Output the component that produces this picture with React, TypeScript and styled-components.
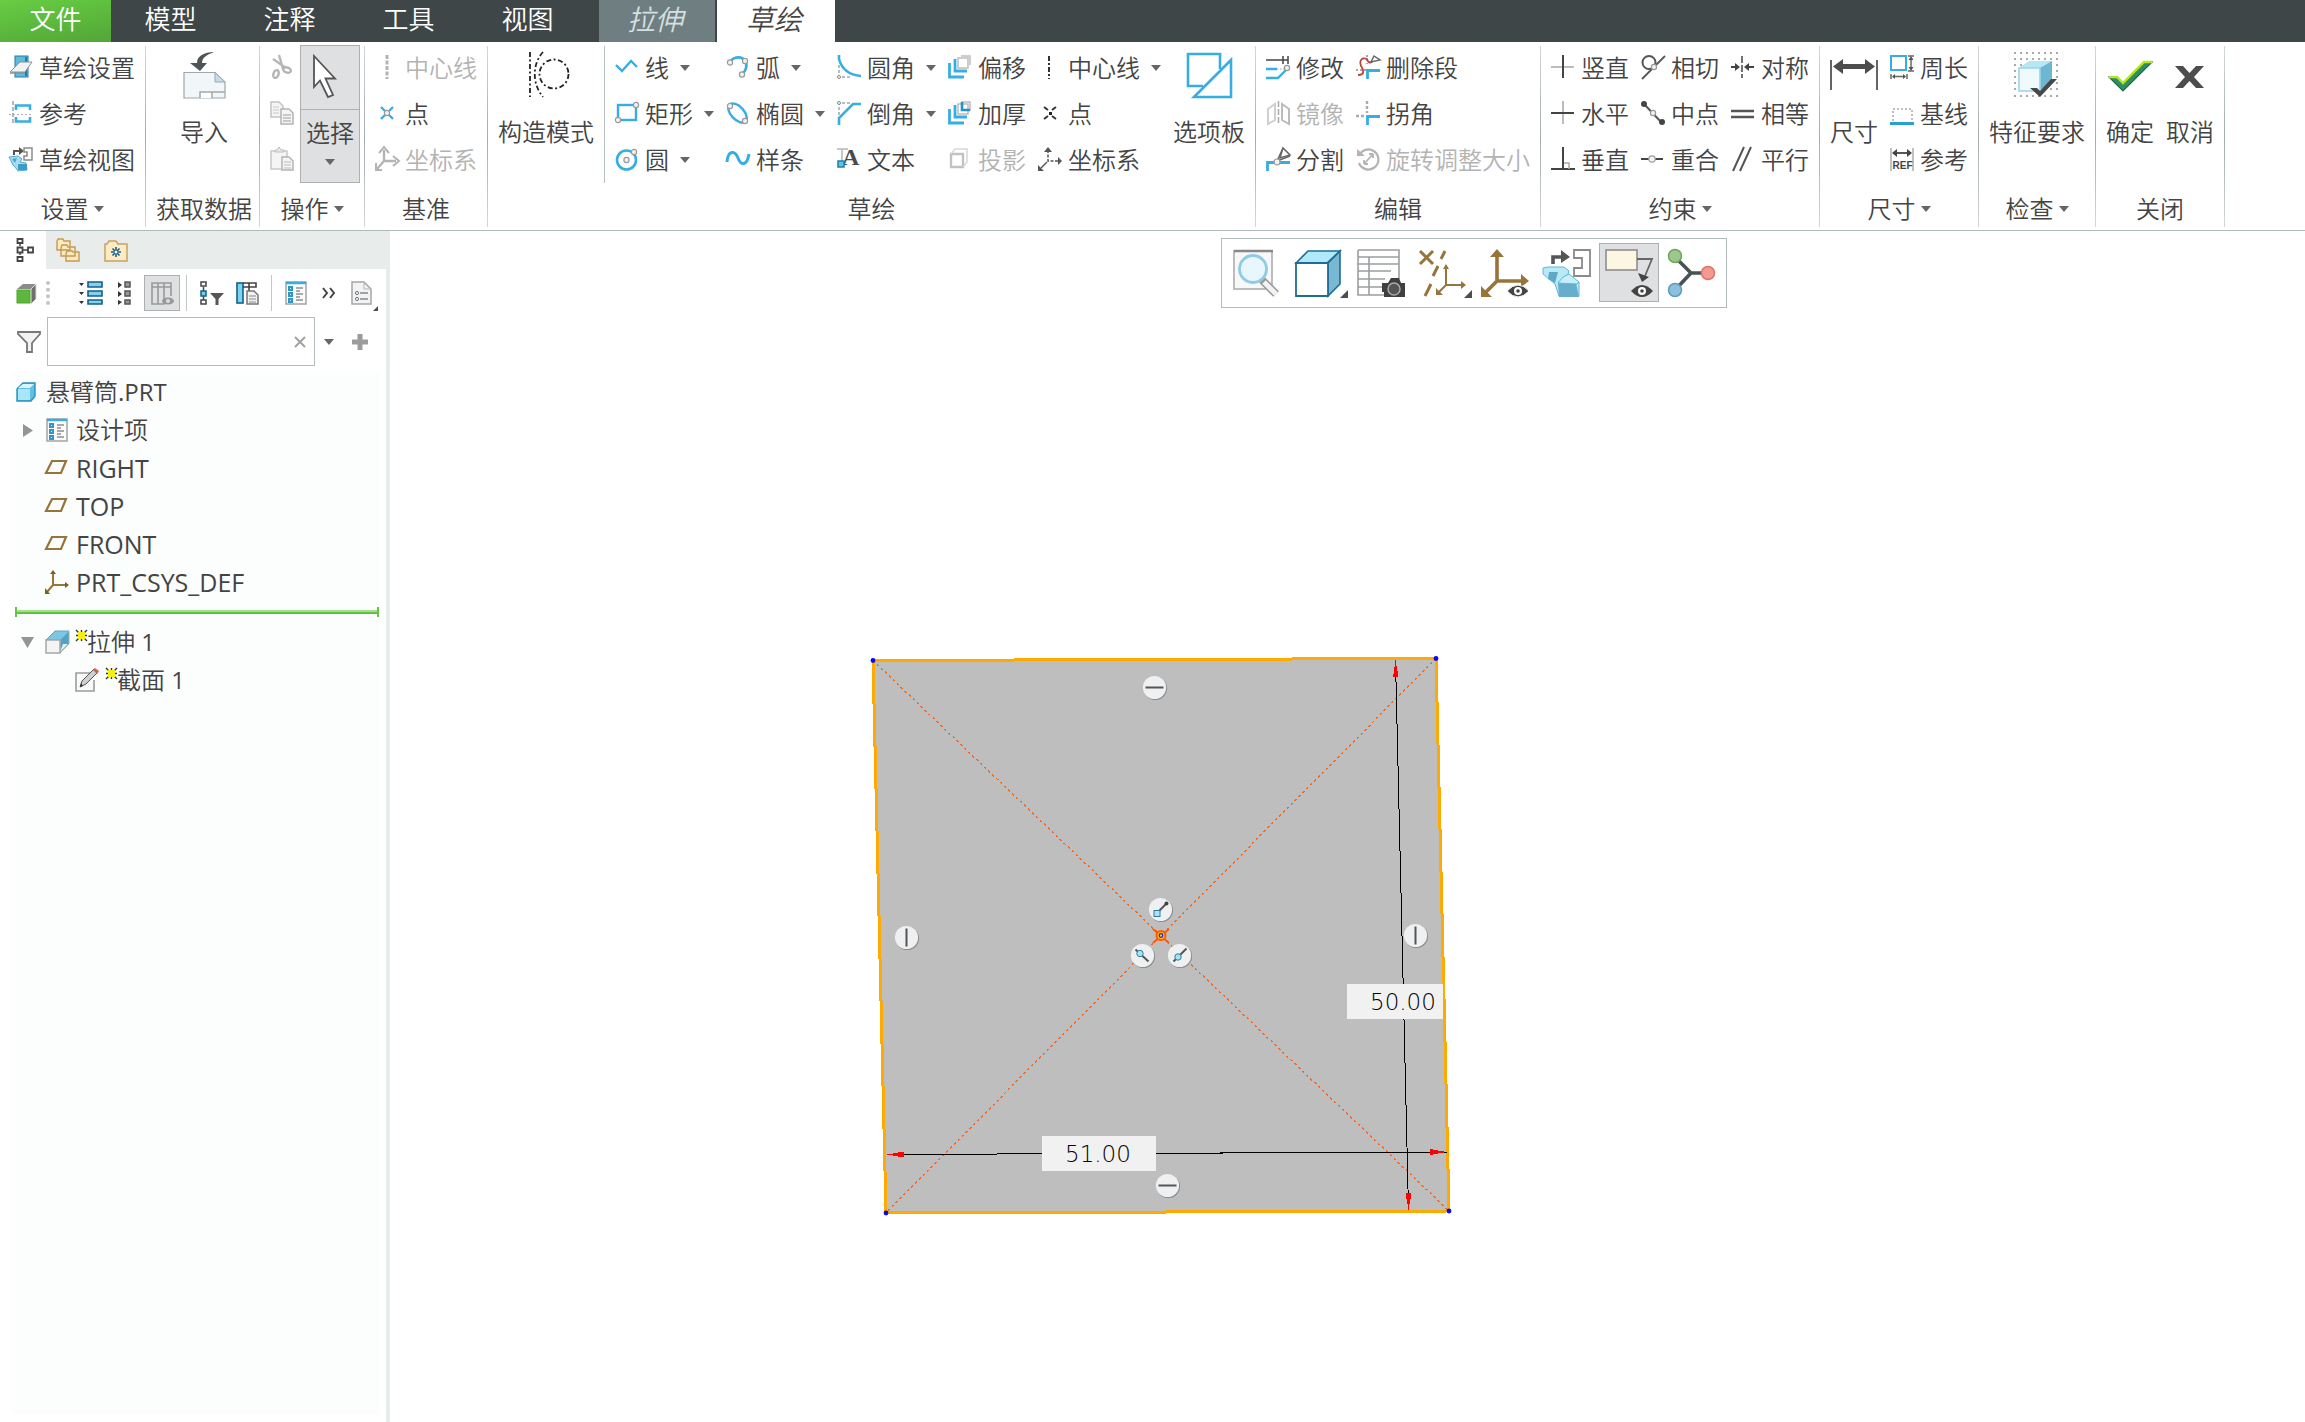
import React from "react";
import styled, { createGlobalStyle, css } from "styled-components";

const ink = "#444444";
const blue = "#36aee4";
const deep = "#1f7fa8";
const gray = "#b4b4b4";
const bronze = "#96743a";

const GlobalStyle = createGlobalStyle`
  *, *::before, *::after { box-sizing: border-box; }
  body { margin: 0; background: #ffffff; }
  body, button, input {
    font-family: "Open Sans", "Noto Sans CJK SC DemiLight", "Noto Sans CJK SC", sans-serif;
    font-size: 24px;
    color: ${ink};
  }
  button { border: 0; padding: 0; margin: 0; background: none; cursor: pointer; }
`;

/* ---------- icons ---------- */

const Dot = ({ x, y, r = 2.6 }: { x: number; y: number; r?: number }) => (
  <circle cx={x} cy={y} r={r} fill="#f2f2f2" stroke="#9a9a9a" strokeWidth="1.2" />
);

const small: Record<string, React.ReactNode> = {
  setup: (
    <>
      <rect x="6" y="1" width="13" height="21" fill="#62b9de" stroke={deep} />
      <path d="M17 2v19" stroke={deep} strokeWidth="2" />
      <path d="M1 17L11 7H23L16 17Z" fill="#f0f3f4" stroke="#8c9294" />
      <path d="M1 18h15" stroke="#8c9294" strokeWidth="1.5" />
    </>
  ),
  reference: (
    <>
      <path d="M4 0V23" stroke="#9a9a9a" strokeDasharray="4 2" strokeWidth="1.4" />
      <path d="M0 13.500H22" stroke="#b0b0b0" strokeDasharray="2 2" />
      <path d="M7 9V4.500H21V9M7 16V20.500H21V16" stroke={blue} strokeWidth="2.6" />
    </>
  ),
  sketchView: (
    <>
      <path d="M5 8V4H11" stroke="#555" strokeWidth="2" />
      <path d="M10 0L15 4L10 8Z" fill="#555" />
      <path d="M15 1H23V13H15V9H18V5H15Z" fill="#fff" stroke="#8a8a8a" strokeWidth="1.500" />
      <path d="M0 10L9 9L13 12L11 15L17 16L18 23L9 24L6 20L4 18Z" fill="#a9dcf0" stroke="#55acd0" />
      <path d="M9 17H18V23H9Z" fill="#3d9cc6" />
      <path d="M3 12L8 11L6 16Z" fill="#4ba5cc" />
    </>
  ),
  cut: (
    <>
      <path d="M9 0L13 14M3 4L16 13" stroke="#b5b8b9" strokeWidth="2.400" />
      <ellipse cx="6" cy="19" rx="2.500" ry="4" transform="rotate(20 6 19)" stroke={gray} strokeWidth="2.400" />
      <ellipse cx="17" cy="15" rx="4" ry="2.500" transform="rotate(20 17 15)" stroke={gray} strokeWidth="2.400" />
    </>
  ),
  copy: (
    <>
      <path d="M1 1H9L13 5V16H1Z" fill="#f5f5f5" stroke="#c4c4c4" strokeWidth="1.500" />
      <path d="M3 6h6M3 9h6M3 12h6" stroke="#c9c9c9" />
      <path d="M11 8H19L23 12V23H11Z" fill="#f5f5f5" stroke="#b4b4b4" strokeWidth="1.500" />
      <path d="M13 14h8M13 17h8M13 20h8" stroke="#bbb" strokeWidth="1.500" />
    </>
  ),
  paste: (
    <>
      <path d="M1 4H17V22H1Z" fill="#f5f5f5" stroke="#c8c8c8" strokeWidth="1.500" />
      <path d="M5 5V3H7L9 0L11 3H14V5Z" fill="#e9e9e9" stroke="#bdbdbd" />
      <path d="M12 10H19L23 14V23H12Z" fill="#f5f5f5" stroke="#b4b4b4" strokeWidth="1.500" />
      <path d="M14 15h7M14 18h7M14 21h7" stroke="#bbb" strokeWidth="1.200" />
    </>
  ),
  axisOff: <path d="M12 0V24" stroke={gray} strokeWidth="3" strokeDasharray="4 1.500" />,
  datumPoint: (
    <>
      <path d="M6 6L10 10M18 6L14 10M6 18L10 14M18 18L14 14" stroke={blue} strokeWidth="2.400" />
      <Dot x={12} y={12} />
    </>
  ),
  csysOff: (
    <>
      <path d="M9 3V14H21M9 14L2 22" stroke={gray} strokeWidth="2.400" />
      <path d="M4 6L9 0L14 6M18 9L24 14L18 19M1 16V23H7" stroke={gray} strokeWidth="2" />
    </>
  ),
  line: <path d="M1 10L7 16L16 6L22 12" stroke={blue} strokeWidth="2.400" />,
  rect: (
    <>
      <rect x="3" y="4" width="18" height="15" stroke={blue} strokeWidth="2.400" />
      <Dot x={3} y={19} />
      <Dot x={21} y={4} />
    </>
  ),
  circle: (
    <>
      <circle cx="11.500" cy="13" r="9.500" stroke={blue} strokeWidth="2.600" />
      <Dot x={11.5} y={13} />
      <Dot x={19} y={5} />
    </>
  ),
  arc: (
    <>
      <path d="M4 7C8 1 16 1 19 6C22 10 20 16 16 19" stroke={blue} strokeWidth="2.600" />
      <Dot x={4} y={7.5} />
      <Dot x={19} y={6} />
      <Dot x={16} y={19.5} />
    </>
  ),
  ellipse: (
    <>
      <ellipse cx="11.500" cy="12" rx="11.500" ry="6.500" transform="rotate(47 11.500 12)" stroke={blue} strokeWidth="2.400" />
      <Dot x={4} y={5} />
      <Dot x={19} y={20} />
    </>
  ),
  spline: <path d="M1 15C2 3 9 3 12 11S21 19 23 7" stroke={blue} strokeWidth="3" />,
  fillet: (
    <>
      <path d="M2 10V22H14" stroke="#777" strokeDasharray="3 2" />
      <path d="M2 0V4C5 15 12 20 24 21" stroke={blue} strokeWidth="2.600" />
      <circle cx="2" cy="22" r="1.500" stroke="#888" fill="#fff" />
    </>
  ),
  chamfer: (
    <>
      <path d="M2 14V2H14" stroke="#777" strokeDasharray="3 2" />
      <path d="M2 24V17L16 3H24" stroke={blue} strokeWidth="2.600" />
      <circle cx="2" cy="2" r="1.500" stroke="#888" fill="#fff" />
    </>
  ),
  text: (
    <>
      <path d="M0 2H11M5 2V14" stroke="#b5b5b5" strokeWidth="1.500" />
      <text x="5" y="18" fontFamily="Liberation Serif, serif" fontWeight="700" fontSize="24" fill="#4a4a4a">A</text>
      <rect x="1" y="14" width="6" height="6" fill="#5ec2ea" stroke={deep} strokeWidth="1.500" />
    </>
  ),
  offset: (
    <>
      <path d="M10 3H20V13H10ZM13 1H22V10" stroke="#bdbdbd" strokeWidth="1.500" />
      <path d="M1.500 8V22H16" stroke={blue} strokeWidth="2.800" />
      <path d="M7 4V16H19" stroke={blue} strokeWidth="2.800" />
    </>
  ),
  thicken: (
    <>
      <path d="M10 3H20V13H10ZM13 1H22V10" stroke="#bdbdbd" strokeWidth="1.500" />
      <path d="M1.500 8V22H16" stroke={blue} strokeWidth="2.800" />
      <path d="M7 4V16H19" stroke={blue} strokeWidth="2.800" />
      <path d="M14 1V9H22" stroke="#2493c8" strokeWidth="2.600" />
    </>
  ),
  project: (
    <>
      <path d="M3 7H15V20H3Z" stroke="#c2c2c2" strokeWidth="2.400" />
      <path d="M3 7L7 2H19V15L15 20" stroke="#d8d8d8" strokeWidth="1.500" />
    </>
  ),
  centerline: <path d="M11 1V24" stroke="#333" strokeWidth="2" strokeDasharray="5 2 2 2" />,
  point: (
    <>
      <path d="M6 6L10 9M18 6L14 9M6 18L10 15M18 18L14 15" stroke="#333" strokeWidth="2" />
      <rect x="11" y="11" width="3" height="3" fill="#222" />
    </>
  ),
  csys: (
    <>
      <path d="M10 3V14H20" stroke="#555" strokeWidth="1.500" strokeDasharray="3 1.500" />
      <path d="M6 5L10 0L14 5ZM20 10L24 14L20 18ZM0 18V24H6Z" fill="#555" />
      <path d="M9 15L3 21" stroke="#555" strokeWidth="1.500" />
    </>
  ),
  modify: (
    <>
      <path d="M0 5H22M17 1V9M22 1V9" stroke="#444" strokeWidth="1.500" />
      <path d="M0 14H11M0 23H12L20 15" stroke={blue} strokeWidth="2.400" />
      <path d="M11 14H19" stroke="#aaa" strokeDasharray="1.500 1.500" />
      <Dot x={21} y={13} />
    </>
  ),
  mirror: (
    <>
      <path d="M2 8L9 3V19L2 23Z" stroke="#d0d0d0" strokeWidth="2" />
      <path d="M23 8L16 3V19L23 23Z" stroke="#bcbcbc" strokeWidth="2" />
      <path d="M12.500 0V24" stroke="#aaa" strokeWidth="1.500" strokeDasharray="6 2" />
    </>
  ),
  divide: (
    <>
      <path d="M1.500 24V15.500H24" stroke={blue} strokeWidth="2.800" />
      <path d="M11 14L17 1M11 14L24 9" stroke="#666" strokeWidth="1.500" />
      <path d="M14 11L17 1L24 8Z" fill="#fff" stroke="#666" strokeWidth="1.500" />
      <Dot x={11} y={15} r={3} />
    </>
  ),
  trimDelete: (
    <>
      <path d="M11 0V9M0 15H10" stroke="#aaa" strokeWidth="2" strokeDasharray="2 2" />
      <path d="M11.500 24V15.500H24" stroke={blue} strokeWidth="2.800" />
      <path d="M2 20C9 20 8 15 5 11C3 5 6 2 11 4C12 8 15 9 17 5" stroke="#b4483c" strokeWidth="1.800" />
      <path d="M15 7L18 1L24 5Z" fill="#fff" stroke="#666" strokeWidth="1.500" />
    </>
  ),
  corner: (
    <>
      <path d="M11 0V12M0 15H10" stroke="#aaa" strokeWidth="2.400" strokeDasharray="3 2" />
      <path d="M11.500 24V15.500H24" stroke={blue} strokeWidth="2.800" />
    </>
  ),
  rotate: (
    <>
      <path d="M3 9A10 10 0 1 1 3 16" stroke={gray} strokeWidth="2.200" />
      <path d="M1 2V9H9Z" fill={gray} />
      <path d="M8 17L17 7M17 7h-4M17 7v4M8 17h4M8 17v-4" stroke={gray} strokeWidth="1.800" />
    </>
  ),
  vertical: (
    <>
      <path d="M0 12H23" stroke="#bdbdbd" strokeWidth="2" />
      <path d="M12 0V23" stroke="#444" strokeWidth="2" />
    </>
  ),
  horizontal: (
    <>
      <path d="M12 0V23" stroke="#bdbdbd" strokeWidth="2" />
      <path d="M0 12H23" stroke="#444" strokeWidth="2" />
    </>
  ),
  perpendicular: (
    <>
      <path d="M12 0V22M0 22H24" stroke="#444" strokeWidth="2" />
      <path d="M13 16H18V22" stroke="#aaa" strokeWidth="1.500" />
    </>
  ),
  tangent: (
    <>
      <circle cx="8" cy="7.500" r="6.500" stroke="#555" strokeWidth="2" />
      <path d="M1 24L24 1" stroke="#555" strokeWidth="1.800" />
      <Dot x={13} y={12} />
    </>
  ),
  midpoint: (
    <>
      <path d="M3 3L21 22" stroke="#555" strokeWidth="2" />
      <circle cx="3" cy="3" r="3" fill="#444" />
      <circle cx="21" cy="21" r="3" fill="#444" />
      <Dot x={12} y={12} />
    </>
  ),
  coincident: (
    <>
      <path d="M0 12H22" stroke="#444" strokeWidth="2" />
      <Dot x={11} y={12} r={3.2} />
    </>
  ),
  symmetric: (
    <>
      <path d="M11 1V23" stroke="#444" strokeWidth="1.500" strokeDasharray="7 2" />
      <path d="M0 12H6M17 12H23" stroke="#444" strokeWidth="1.800" />
      <path d="M4 8L9 12L4 16ZM18 8L13 12L18 16Z" fill="#444" />
    </>
  ),
  equal: <path d="M0 10H23M0 16H23" stroke="#555" strokeWidth="2.400" />,
  parallel: <path d="M2 24L13 0M9 24L20 0" stroke="#555" strokeWidth="2" />,
  perimeter: (
    <>
      <rect x="1" y="1" width="15" height="14" stroke={blue} strokeWidth="2" />
      <path d="M18 1H24M18 16H24M21 3V14M1 19V24M17 19V24M3 21.500H15" stroke="#666" strokeWidth="1.500" />
      <path d="M18.500 5L21 1L23.500 5ZM18.500 12L21 16L23.500 12ZM5 19L2 21.500L5 24ZM13 19L16 21.500L13 24Z" fill="#555" />
    </>
  ),
  baseline: (
    <>
      <path d="M3 20V8H22V20" stroke="#aaa" strokeWidth="1.500" strokeDasharray="2 2" />
      <path d="M0 22.500H24" stroke="#2b9fd4" strokeWidth="3" />
    </>
  ),
  refDim: (
    <>
      <path d="M1 1V24M23 1V24" stroke="#999" strokeWidth="1.200" />
      <path d="M3 6H21" stroke="#444" strokeWidth="1.800" />
      <path d="M7 2L2 6L7 10ZM17 2L22 6L17 10Z" fill="#444" />
      <text x="2.500" y="22" fontFamily="Liberation Sans, sans-serif" fontWeight="700" fontSize="10" fill="#444">REF</text>
    </>
  ),
  /* side panel */
  tree: (
    <>
      <path d="M6 6V8M6 14V17M9 12H14" stroke="#444" strokeWidth="1.500" />
      <path d="M3.500 1H8.500V5H3.500ZM3.500 9.500H8.500V14.500H3.500ZM3.500 19H8.500V23H3.500ZM14 9.500H19V14.500H14Z" stroke="#444" strokeWidth="1.800" />
    </>
  ),
  folders: (
    <path d="M1 3L2 1H7L8 3H14V12H1ZM5 10L6 7H11L12 9H19V18H5ZM10 16L11 13H16L17 14H23V23H10Z" fill="#fbe9c0" stroke="#c49a55" strokeWidth="1.400" />
  ),
  favorites: (
    <>
      <path d="M1 23V6H3L5 3H12L14 6H23V23Z" fill="#fdebc4" stroke="#c9a163" strokeWidth="1.500" />
      <path d="M12 9V19M7 14H17M8.500 10.500L15.500 17.500M15.500 10.500L8.500 17.500" stroke="#15608a" strokeWidth="1.600" />
      <circle cx="12" cy="14" r="1.500" fill="#fff" />
    </>
  ),
  greenCube: (
    <>
      <path d="M1 8L7 3H20L15 8Z" fill="#8b8b8b" />
      <path d="M15 8L20 3V18L15 23Z" fill="#6f6f6f" stroke="#ddd" strokeWidth="1" />
      <rect x="1" y="9" width="13" height="13" fill="#5cb83a" stroke="#4ca52c" />
    </>
  ),
  expand: (
    <>
      <path d="M0 2H5L2.500 5ZM0 11H5L2.500 14ZM0 20H5L2.500 23Z" fill="#333" />
      <path d="M9 1H23V6H9ZM9 10H23V15H9ZM9 19H23V23H9Z" fill="#7fd3f2" stroke="#155f86" strokeWidth="1.600" />
    </>
  ),
  collapse: (
    <>
      <path d="M5 1L9 4L5 7ZM5 10L9 13L5 16ZM5 19L9 21L5 24Z" fill="#333" />
      <path d="M12 1H17V6H12ZM12 10H17V15H12ZM12 19H17V23H12Z" fill="#999" stroke="#555" strokeWidth="1.500" />
    </>
  ),
  columns: (
    <>
      <path d="M2 2H21V6H2ZM2 6V23H8V2M8 6V23H14V2M14 6V23M21 6V15" stroke="#999" strokeWidth="1.600" />
      <ellipse cx="18" cy="20" rx="6" ry="3.500" fill="#999" />
      <circle cx="18" cy="20" r="2" fill="#ddd" />
    </>
  ),
  treeFilter: (
    <>
      <path d="M3.500 6V19" stroke="#444" strokeWidth="1.500" />
      <path d="M1 1H6V5H1ZM1 19H6V23H1Z" fill="#fff" stroke="#444" strokeWidth="1.500" />
      <rect x="1" y="10" width="5" height="5" fill="#6fcdf2" stroke="#155f86" strokeWidth="1.500" />
      <path d="M10 12H24L18.500 18V24H15.500V18Z" fill="#555" />
    </>
  ),
  columnDoc: (
    <>
      <rect x="1" y="2" width="6" height="20" fill="#7fd3f2" stroke="#155f86" strokeWidth="1.600" />
      <path d="M7 2H20V6H7M13 2V12" stroke="#444" strokeWidth="1.600" />
      <path d="M11 10H18L22 14V23H11Z" fill="#f2f2f2" stroke="#777" strokeWidth="1.500" />
      <path d="M13 15h7M13 18h7M13 21h7" stroke="#888" />
    </>
  ),
  list: (
    <>
      <rect x="2" y="1" width="20" height="22" fill="#fbfbfb" stroke="#a4a4a4" strokeWidth="1.500" />
      <path d="M2 2H22" stroke={blue} strokeWidth="2.400" />
      <path d="M5 6h3v3H5ZM5 12h3v3H5ZM5 18h3v3H5Z" fill="#d8f1fb" stroke="#2f97c8" strokeWidth="2" />
      <path d="M12 7H19M12 10H16M12 13H19M12 16H16M12 19H19" stroke="#909090" strokeWidth="1.300" />
    </>
  ),
  docList: (
    <>
      <path d="M3 1H15L22 8V23H3Z" fill="#f1f3f4" stroke="#a6a6a6" strokeWidth="1.500" />
      <path d="M15 1V8H22" stroke="#b5b5b5" />
      <circle cx="8" cy="12" r="1.600" stroke="#777" />
      <circle cx="8" cy="18" r="1.600" stroke="#777" />
      <path d="M11 12H19M11 18H19" stroke="#888" strokeWidth="1.500" />
    </>
  ),
  more: <path d="M2 7L6 12L2 17M9 7L13 12L9 17" stroke="#444" strokeWidth="2" />,
  funnel: (
    <path d="M1 2H23V4L15 13V22H10V13L1 4Z" fill="#f2f2f2" stroke="#777" strokeWidth="1.800" />
  ),
  clear: <path d="M7 7L17 17M17 7L7 17" stroke="#a2a2a2" strokeWidth="2" />,
  plus: <path d="M12 4V20M4 12H20" stroke="#9c9c9c" strokeWidth="5" />,
  part: (
    <>
      <path d="M2 9L8 3H20V16L16 21H2Z" fill="#5fc0e8" stroke="#2b90bd" strokeWidth="1.400" />
      <rect x="3" y="9" width="12" height="11" fill="#a9e6fa" />
      <path d="M3 8L8 4H19L15 8Z" fill="#d9f5fd" />
    </>
  ),
  plane: <path d="M1 17L7 5H21L16 17Z" stroke={bronze} strokeWidth="2.200" />,
  partCsys: (
    <>
      <path d="M8 2V15H22M8 15L2 22" stroke={bronze} strokeWidth="2" />
      <path d="M5 4L8 0L11 4ZM20 12L24 15L20 18ZM0 18V24H5Z" fill="#7d5e28" />
    </>
  ),
  extrude: (
    <>
      <path d="M1 10L10 1H24L15 10Z" fill="#7cc6e2" stroke="#5aa9c9" />
      <path d="M15 10L24 1V14L15 23Z" fill="#4fa3c4" stroke="#a5acb0" />
      <path d="M15 22L23 14H18Z" fill="#dff3fb" />
      <rect x="1" y="10" width="14" height="13" fill="#f4f4f4" stroke="#a7a7a7" strokeWidth="1.500" />
    </>
  ),
  section: (
    <>
      <path d="M15 5H1V23H19V12" stroke="#9c9c9c" strokeWidth="1.600" fill="#fafafa" />
      <path d="M5 19L7 13L19 1L23 4L11 16Z" fill="#cfcfcf" stroke="#555" />
      <path d="M18 2L20 0L24 3L22 6Z" fill="#d0605a" />
      <path d="M5 19L6 15L8 18Z" fill="#333" />
    </>
  ),
};

const large: Record<string, React.ReactNode> = {
  import: (
    <>
      <path d="M4 21.500H35L45 31V47H4Z" fill="#f1f6f9" stroke="#9fa8ab" strokeWidth="1.200" />
      <path d="M35 21.500V31H45Z" fill="#c6dce8" stroke="#9fa8ab" />
      <path d="M20 47V41H32V47M32 41H45" fill="#fff" stroke="#a3a8aa" strokeWidth="1.500" />
      <path d="M34 1C24 1 17 5 17 12H10L20 20L27 12H22C22 7 26 4 34 1Z" fill="#4d5557" />
    </>
  ),
  construction: (
    <g stroke="#222" strokeWidth="1.800" strokeDasharray="5 2.500 2 2.500">
      <path d="M8 1V46" />
      <path d="M21 1C10 13 10 33 21 46" />
      <circle cx="32" cy="23" r="14.500" />
    </g>
  ),
  palette: (
    <g stroke={blue} strokeWidth="2.600">
      <path d="M35 18V3H3V35H18" />
      <path d="M46 9V46H9Z" />
    </g>
  ),
  dimension: (
    <>
      <path d="M1 9V39M47 9V39" stroke="#555" strokeWidth="1.800" />
      <path d="M8 15.500H40" stroke="#4d4d4d" strokeWidth="5" />
      <path d="M13 8L3 15.500L13 23ZM35 8L45 15.500L35 23Z" fill="#4d4d4d" />
    </>
  ),
  feature: (
    <>
      <path d="M1 2H46M1 8H46M1 14H46M1 20H46M1 26H46M1 32H46M1 38H46M1 45H46" stroke="#aaa" strokeWidth="1.800" strokeDasharray="2 4" />
      <path d="M6 17L17 10H39V30L27 40H6Z" fill="#6db7d3" />
      <path d="M6 17L17 10H39L27 17Z" fill="#b6e7f7" />
      <path d="M6 17H27V40H6Z" fill="#f0fafd" stroke="#9bd4e9" strokeWidth="1.600" />
      <path d="M17 37H24L27 40L38 28H44L27 46Z" fill="#484848" />
    </>
  ),
  ok: (
    <>
      <path d="M3 26H11L17 32L38 11H46L17 40Z" fill="#2f8f63" stroke="#1d6b45" strokeWidth="1.200" />
      <path d="M3 26H11L17 32L38 11H46" stroke="#b6e61f" strokeWidth="2.400" />
    </>
  ),
  cancel: <path d="M9 15H17L23.500 22L30 15H38L28 26L38 37H30L23.500 30L17 37H9L19 26Z" fill="#4d4d4d" />,
  pointer: (
    <path d="M8 5V36L14 29.500L22 46L27 44L19.500 27.500H29Z" fill="#fff" stroke="#555" strokeWidth="1.800" />
  ),
  zoomFit: (
    <>
      <rect x="1" y="2" width="38" height="38" fill="#f7f8f8" stroke="#adadad" strokeWidth="1.600" />
      <path d="M1 2H40" stroke="#888" strokeWidth="2.400" />
      <path d="M29 31L43 45" stroke="#9a9a9a" strokeWidth="8" />
      <path d="M31 33L43 45" stroke="#f3f3f3" strokeWidth="5" />
      <circle cx="20" cy="20" r="13.500" fill="#e7f7fd" stroke="#8fcbe6" strokeWidth="2.800" />
    </>
  ),
  shaded: (
    <>
      <path d="M1 14L13 2H45L32 14Z" fill="#aeeafb" stroke="#1e6d92" strokeWidth="1.600" />
      <path d="M33 14L45 2V35L33 47Z" fill="#78b8d3" stroke="#1e6d92" strokeWidth="1.600" />
      <path d="M1 14H33V47H1Z" fill="#fff" stroke="#1e6d92" strokeWidth="1.800" />
    </>
  ),
  views: (
    <>
      <rect x="1" y="1" width="41" height="45" fill="#fff" />
      <path d="M1 1H42V30M1 1V46H28M1 8H42M1 15H42M1 22H34M1 30H28M1 38H28M12 8V46" stroke="#9b9fa0" strokeWidth="1.600" />
      <path d="M25 34H31L34 29H42L44 34H48V48H27V43H25Z" fill="#3f3f3f" />
      <circle cx="37" cy="40" r="6" stroke="#aaa" strokeWidth="1.500" fill="#555" />
    </>
  ),
  datums: (
    <>
      <path d="M1 2L14 15M14 2L1 15M26 2L22 10M19 17L14 27M12 35L6 47" stroke={bronze} strokeWidth="3" />
      <path d="M27 18V36H44M27 36L19 44" stroke={bronze} strokeWidth="2" />
      <path d="M24 20L27 15L30 20ZM42 32L47 36L42 40ZM17 39V46H24Z" fill={bronze} />
    </>
  ),
  csysView: (
    <>
      <path d="M16 5V32H42M16 32L4 44" stroke={bronze} strokeWidth="3.600" />
      <path d="M9 8L16 0L23 8ZM40 25L48 32L40 38ZM0 37V48H11Z" fill={bronze} />
      <path d="M26 42Q37 30 48 42Q37 54 26 42Z" fill="#444" stroke="#fff" />
      <circle cx="37" cy="42" r="4" fill="#fff" />
      <circle cx="37" cy="42" r="1.800" fill="#444" />
    </>
  ),
  orient: (
    <>
      <path d="M10 15V8H20" stroke="#555" strokeWidth="3.600" />
      <path d="M18 1L27 8L18 14Z" fill="#555" />
      <path d="M31 1H47V27H31V19H39V9H31Z" fill="#fff" stroke="#8a8a8a" strokeWidth="1.800" />
      <path d="M0 19L5 18H21L26 22L24 28L36 33V47H16L12 35L0 25Z" fill="#b9e8f7" stroke="#5cb7dc" />
      <path d="M6 23H15L12 34L5 30Z" fill="#5ea9c8" />
      <path d="M15 34H33L36 48H16Z" fill="#66aecb" />
      <path d="M15 34L20 28L26 25L36 33L34 35Z" fill="#c7effa" stroke="#5cb7dc" />
    </>
  ),
  annotation: (
    <>
      <rect x="1" y="1" width="31" height="20" fill="#fdf6e2" stroke="#8e8e8e" strokeWidth="1.600" />
      <path d="M32 10H47L40 27" stroke="#666" strokeWidth="1.800" />
      <path d="M33 24L44 28L37 33Z" fill="#444" />
      <path d="M26 42Q37 30 48 42Q37 54 26 42Z" fill="#444" />
      <circle cx="37" cy="42" r="4" fill="#fff" />
      <circle cx="37" cy="42" r="1.800" fill="#444" />
    </>
  ),
  spin: (
    <>
      <path d="M8 8L24 24L8 41M24 24H40" stroke="#4b5052" strokeWidth="3.600" />
      <circle cx="8" cy="7" r="6.500" fill="#9cc98b" stroke="#6ea45b" strokeWidth="1.500" />
      <circle cx="41" cy="24" r="6.500" fill="#f49a92" stroke="#e0716a" strokeWidth="1.500" />
      <circle cx="8" cy="41" r="6.500" fill="#8cc0dc" stroke="#5c9cc0" strokeWidth="1.500" />
    </>
  ),
};

const Glyph = styled.svg`
  display: block;
  flex: none;
  fill: none;
  overflow: visible;
`;

const Icon = ({ name }: { name: string }) => (
  <Glyph width="24" height="24" viewBox="0 0 24 24" aria-hidden="true">{small[name]}</Glyph>
);

const LargeIcon = ({ name }: { name: string }) => (
  <Glyph width="48" height="48" viewBox="0 0 48 48" aria-hidden="true">{large[name]}</Glyph>
);

const Caret = () => (
  <Glyph width="10" height="6" viewBox="0 0 10 6" aria-hidden="true">
    <path d="M0 0H10L5 6Z" fill="#666" />
  </Glyph>
);

/* ---------- layout ---------- */

const Page = styled.div`
  min-height: 100vh;
  display: flex;
  flex-direction: column;
`;

const TabBar = styled.nav`
  display: flex;
  height: 42px;
  background: #3e4647;
`;

const Tab = styled.button<{ $kind?: "file" | "context" | "active" }>`
  width: 119px;
  padding-bottom: 4px;
  font-size: 26px;
  line-height: 38px;
  color: #ffffff;
  ${(p) => p.$kind === "file" && css`
    width: 111px;
    background: linear-gradient(170deg, #67cd43, #52a637);
  `}
  ${(p) => p.$kind === "context" && css`
    width: 116px;
    margin: 0 2px 0 12px;
    padding-right: 4px;
    font-size: 28px;
    font-style: italic;
    color: #d5e0e0;
    background: #6f7e80;
  `}
  ${(p) => p.$kind === "active" && css`
    width: 118px;
    padding-right: 4px;
    font-size: 28px;
    font-style: italic;
    color: ${ink};
    background: #ffffff;
  `}
`;

const RibbonBar = styled.div`
  display: flex;
  padding: 3px 0;
  border-bottom: 1px solid #afbabb;
`;

const Group = styled.section<{ $left?: number; $right?: number }>`
  display: flex;
  flex-direction: column;
  align-items: center;
  padding: 0 ${(p) => p.$right ?? 11}px 0 ${(p) => p.$left ?? 10}px;
  background: linear-gradient(#d3d8d8, #a3acad 50%, #d3d8d8) right 0 top 1px / 1px 100% no-repeat;
`;

const GroupBody = styled.div`
  display: flex;
  flex: none;
  gap: 12px;
  height: 138px;
`;

const GroupLabel = styled.div`
  display: flex;
  align-items: center;
  gap: 5px;
  padding-top: 8px;
  line-height: 36px;
`;

const Column = styled.div`
  display: grid;
  grid-auto-rows: 46px;
`;

const Command = styled.button`
  display: flex;
  align-items: center;
  gap: 6px;
  line-height: 36px;
  white-space: nowrap;
  &:disabled { color: #b3b3b3; cursor: default; }
  > svg { margin-bottom: 2px; }
`;

const CommandCaret = styled.span`
  padding-left: 5px;
`;

const BigCommand = styled.button`
  display: flex;
  flex-direction: column;
  align-items: center;
  gap: 15px;
  padding-top: 6px;
  line-height: 36px;
  white-space: nowrap;
`;

const Rule = styled.div`
  width: 1px;
  margin: 1px -2px 0 -2px;
  background: #b9c0c0;
`;

const SplitButton = styled.div`
  display: flex;
  flex-direction: column;
  width: 60px;
  margin: 0 -6px;
  background: #dfe0e2;
  border: 1px solid #adb0b1;
`;

const SplitTop = styled.button`
  display: flex;
  justify-content: center;
  height: 64px;
  padding-top: 5px;
  border-bottom: 1px solid #adb0b1;
`;

const SplitBottom = styled.button`
  display: flex;
  flex: 1;
  flex-direction: column;
  align-items: center;
  gap: 8px;
  padding-top: 5px;
  line-height: 36px;
`;

type Item = { icon: string; text?: string; menu?: boolean; off?: boolean };

const Commands = ({ items }: { items: Item[] }) => (
  <Column>
    {items.map((it) => (
      <Command key={it.icon} disabled={it.off} aria-label={it.text ? undefined : it.icon}>
        <Icon name={it.icon} />
        {it.text}
        {it.menu && <CommandCaret><Caret /></CommandCaret>}
      </Command>
    ))}
  </Column>
);

const Big = ({ icon, text }: { icon: string; text: string }) => (
  <BigCommand><LargeIcon name={icon} />{text}</BigCommand>
);

type GroupProps = { label: string; menu?: boolean; left?: number; right?: number; children: React.ReactNode };

const RibbonGroup = ({ label, menu, left, right, children }: GroupProps) => (
  <Group $left={left} $right={right}>
    <GroupBody>{children}</GroupBody>
    <GroupLabel>{label}{menu && <Caret />}</GroupLabel>
  </Group>
);

const Workspace = styled.div`
  display: flex;
  flex: 1;
`;

const Side = styled.aside`
  display: flex;
  flex-direction: column;
  width: 390px;
  flex: none;
  border-right: 4px solid #e8edec;
`;

const SideTabs = styled.div`
  display: flex;
  height: 38px;
  margin-right: -4px;
  background: #e8edec;
`;

const SideTab = styled.button<{ $active?: boolean }>`
  display: flex;
  align-items: center;
  justify-content: ${(p) => (p.$active ? "flex-end" : "center")};
  width: ${(p) => (p.$active ? 46 : 48)}px;
  padding-right: ${(p) => (p.$active ? 8 : 4)}px;
  background: ${(p) => (p.$active ? "#ffffff" : "transparent")};
`;

const ToolRow = styled.div`
  display: flex;
  align-items: center;
  height: 48px;
  padding: 0 10px 0 16px;
`;

const ToolButton = styled.button<{ $on?: boolean; $space?: number }>`
  display: flex;
  align-items: center;
  justify-content: center;
  width: ${(p) => (p.$on ? 36 : 24)}px;
  height: 36px;
  margin-left: ${(p) => p.$space ?? 0}px;
  ${(p) => p.$on && css`
    background: #dfe0e2;
    border: 1px solid #adb0b1;
  `}
`;

const Grip = styled.div`
  width: 4px;
  height: 24px;
  margin-left: 6px;
  border-left: 4px dotted #c4c4c4;
`;

const ToolRule = styled.div<{ $space: number }>`
  width: 1px;
  height: 36px;
  margin-left: ${(p) => p.$space}px;
  background: #c3c8c8;
`;

const FilterRow = styled.div`
  display: flex;
  align-items: center;
  height: 49px;
  padding-left: 17px;
`;

const FilterBox = styled.div`
  display: flex;
  align-items: center;
  width: 268px;
  height: 49px;
  margin: 0 9px 0 6px;
  padding-right: 2px;
  border: 1px solid #afbcbb;
`;

const FilterInput = styled.input`
  flex: 1;
  min-width: 0;
  height: 40px;
  padding: 0 8px;
  border: 0;
  outline: 0;
  background: transparent;
`;

const IconButton = styled.button<{ $space?: number }>`
  display: flex;
  align-items: center;
  height: 36px;
  margin-left: ${(p) => p.$space ?? 0}px;
`;

const Tree = styled.ul`
  flex: 1;
  margin: 7px 7px 8px 11px;
  padding: 0;
  list-style: none;
  background: #fcfdfd;
`;

const Node = styled.li<{ $level: number; $latin?: boolean }>`
  display: flex;
  align-items: center;
  gap: 7px;
  height: 38px;
  padding-left: ${(p) => [4, 4, 34][p.$level]}px;
  font-size: ${(p) => (p.$latin ? 25 : 24)}px;
  line-height: 36px;
  white-space: nowrap;
`;

const Twisty = styled.span`
  display: flex;
  justify-content: center;
  width: 23px;
  padding-left: 1px;
`;

const NodeName = styled.span`
  display: flex;
  align-items: center;
`;

const Spark = styled.span`
  display: flex;
  align-self: flex-start;
  padding-top: 6px;
`;

const InsertLine = styled.li`
  display: flex;
  align-items: center;
  height: 22px;
  padding-left: 4px;
  &::before, &::after {
    content: "";
    width: 2px;
    height: 10px;
    background: #66c544;
  }
`;

const InsertBar = styled.span`
  flex: 1;
  height: 4px;
  background: linear-gradient(#a6de90 50%, #60c33f 50%);
`;

const Canvas = styled.main`
  position: relative;
  flex: 1;
  overflow: hidden;
  background: #ffffff;
`;

const Drawing = styled.svg`
  display: block;
  position: absolute;
  inset: 0;
  width: 100%;
  height: 100%;
  fill: none;
`;

const ViewBar = styled.div`
  position: absolute;
  top: 7px;
  left: 831px;
  display: flex;
  gap: 2px;
  padding: 4px 5px 5px;
  border: 1px solid #afbcbb;
  background: #ffffff;
`;

const ViewButton = styled.button<{ $on?: boolean }>`
  position: relative;
  display: flex;
  align-items: center;
  justify-content: center;
  width: 60px;
  height: 59px;
  border: 1px solid ${(p) => (p.$on ? "#adb0b1" : "transparent")};
  background: ${(p) => (p.$on ? "#dfe0e2" : "transparent")};
`;

const Flyout = styled.span`
  position: absolute;
  right: 0;
  bottom: 3px;
  border-bottom: 8px solid #4d4d4d;
  border-left: 8px solid transparent;
`;

const MiniFlyout = styled(Flyout)`
  right: -5px;
  bottom: 0;
  border-width: 5px;
  border-right: 0;
  border-top: 0;
`;

const ToolWithFlyout = styled(ToolButton)`
  position: relative;
`;

const SparkMark = () => (
  <Spark>
    <Glyph width="11" height="11" viewBox="0 0 11 11" aria-hidden="true">
      <path d="M0 0L11 11M11 0L0 11M5.500 0V11M0 5.500H11" stroke="#333" strokeWidth="1.400" />
      <rect x="2" y="2" width="7" height="7" fill="#f6ee0c" />
    </Glyph>
  </Spark>
);

const Chevron = ({ open }: { open?: boolean }) => (
  <Twisty>
    <Glyph width="13" height="13" viewBox="0 0 13 13" aria-hidden="true">
      <path d={open ? "M0 1H13L6.500 12Z" : "M2 0L12 6.500L2 13Z"} fill="#949494" />
    </Glyph>
  </Twisty>
);

/* ---------- sketch ---------- */

const Badge = ({ x, y, children }: { x: number; y: number; children: React.ReactNode }) => (
  <g transform={`translate(${x} ${y})`}>
    <circle cx="0.800" cy="0.800" r="11.800" fill="#8d8d8d" />
    <circle r="11.600" fill="#eef0f2" />
    {children}
  </g>
);

const DimensionText = styled.text`
  font-family: "DejaVu Sans Light", "Open Sans", sans-serif;
  font-size: 23px;
  font-weight: 200;
  fill: #000000;
`;

const Value = ({ x, y, w, tx, children }: { x: number; y: number; w: number; tx: number; children: string }) => (
  <g>
    <rect x={x} y={y} width={w} height="35" fill="#f1f1f1" />
    <DimensionText x={tx} y={y + 26}>{children}</DimensionText>
  </g>
);

const Sketch = () => (
  <Drawing aria-label="草绘">
    <g transform="translate(-390 -231)">
      <g shapeRendering="crispEdges">
        <path d="M873 660.500L1436 658.500L1449 1211L886 1213Z" fill="#bebebe" />
        <path d="M873 660.500L1449 1211" stroke="#f26a1b" strokeWidth="1.400" strokeDasharray="2.500 3" />
        <path d="M1436 658.500L886 1213" stroke="#f26a1b" strokeWidth="1.400" strokeDasharray="2.500 3" />
        <path d="M873 660.500L1436 658.500L1449 1211L886 1213Z" stroke="#ffaa00" strokeWidth="3" />
        <path d="M1395.500 660L1408.500 1210M887 1154.500L1447 1152" stroke="#000" strokeWidth="1" />
        <path d="M1395.500 660L1398.500 677H1393ZM1408.500 1210L1405.500 1193H1411.500ZM887 1154.500L904 1151.500V1157.500ZM1447 1152L1430 1149V1155Z" fill="#ff0000" />
      </g>
      <Value x={1042} y={1136} w={114} tx={1065}>51.00</Value>
      <Value x={1347} y={984} w={96} tx={1370}>50.00</Value>
      {[[873, 660.5], [1436, 658.5], [1449, 1211], [886, 1213]].map(([x, y]) => (
        <circle key={x} cx={x} cy={y} r="2.400" fill="#0a0af0" />
      ))}
      <Badge x={1154.5} y={687.5}><path d="M-9 0H9" stroke="#555" strokeWidth="2" /></Badge>
      <Badge x={1167.5} y={1185.5}><path d="M-9 0H9" stroke="#555" strokeWidth="2" /></Badge>
      <Badge x={906.5} y={937.5}><path d="M0 -9V9" stroke="#555" strokeWidth="2" /></Badge>
      <Badge x={1415.5} y={935.5}><path d="M0 -9V9" stroke="#555" strokeWidth="2" /></Badge>
      <Badge x={1160.5} y={909.5}>
        <path d="M-3 3L6 -6" stroke="#555" strokeWidth="2" />
        <circle cx="6" cy="-6" r="2" fill="#444" />
        <rect x="-6.500" y="1" width="6" height="6" fill="#a7e3f7" stroke="#2e7d9c" />
      </Badge>
      <Badge x={1142.5} y={955.5}>
        <path d="M-7 -6L6 6" stroke="#555" strokeWidth="2" />
        <circle cx="-2.500" cy="-2" r="3.200" fill="#a7e3f7" stroke="#2e7d9c" />
      </Badge>
      <Badge x={1179.5} y={955.5}>
        <path d="M7 -7L-6 6" stroke="#555" strokeWidth="2" />
        <circle cx="-1.500" cy="1.500" r="3.200" fill="#a7e3f7" stroke="#2e7d9c" />
      </Badge>
      <path d="M1153 929L1169 943M1169 929L1153 943" stroke="#ff5a0a" strokeWidth="2" />
      <circle cx="1161" cy="935.500" r="4.500" fill="#ffc20a" stroke="#ff5a0a" strokeWidth="2" />
      <circle cx="1161" cy="935.500" r="1.800" stroke="#2020d0" strokeWidth="1.200" />
    </g>
  </Drawing>
);

export default function App() {
  return (
    <Page>
      <GlobalStyle />
      <TabBar>
        <Tab $kind="file">文件</Tab>
        <Tab>模型</Tab>
        <Tab>注释</Tab>
        <Tab>工具</Tab>
        <Tab>视图</Tab>
        <Tab $kind="context">拉伸</Tab>
        <Tab $kind="active">草绘</Tab>
      </TabBar>

      <RibbonBar>
        <RibbonGroup label="设置" menu left={9}>
          <Commands items={[{ icon: "setup", text: "草绘设置" }, { icon: "reference", text: "参考" }, { icon: "sketchView", text: "草绘视图" }]} />
        </RibbonGroup>
        <RibbonGroup label="获取数据" right={8}>
          <Big icon="import" text="导入" />
        </RibbonGroup>
        <RibbonGroup label="操作" menu>
          <Commands items={[{ icon: "cut", off: true }, { icon: "copy", off: true }, { icon: "paste", off: true }]} />
          <SplitButton>
            <SplitTop aria-label="选择"><LargeIcon name="pointer" /></SplitTop>
            <SplitBottom>选择<Caret /></SplitBottom>
          </SplitButton>
        </RibbonGroup>
        <RibbonGroup label="基准">
          <Commands items={[{ icon: "axisOff", text: "中心线", off: true }, { icon: "datumPoint", text: "点" }, { icon: "csysOff", text: "坐标系", off: true }]} />
        </RibbonGroup>
        <RibbonGroup label="草绘">
          <Big icon="construction" text="构造模式" />
          <Rule />
          <Commands items={[{ icon: "line", text: "线", menu: true }, { icon: "rect", text: "矩形", menu: true }, { icon: "circle", text: "圆", menu: true }]} />
          <Commands items={[{ icon: "arc", text: "弧", menu: true }, { icon: "ellipse", text: "椭圆", menu: true }, { icon: "spline", text: "样条" }]} />
          <Commands items={[{ icon: "fillet", text: "圆角", menu: true }, { icon: "chamfer", text: "倒角", menu: true }, { icon: "text", text: "文本" }]} />
          <Commands items={[{ icon: "offset", text: "偏移" }, { icon: "thicken", text: "加厚" }, { icon: "project", text: "投影", off: true }]} />
          <Commands items={[{ icon: "centerline", text: "中心线", menu: true }, { icon: "point", text: "点" }, { icon: "csys", text: "坐标系" }]} />
          <Big icon="palette" text="选项板" />
        </RibbonGroup>
        <RibbonGroup label="编辑">
          <Commands items={[{ icon: "modify", text: "修改" }, { icon: "mirror", text: "镜像", off: true }, { icon: "divide", text: "分割" }]} />
          <Commands items={[{ icon: "trimDelete", text: "删除段" }, { icon: "corner", text: "拐角" }, { icon: "rotate", text: "旋转调整大小", off: true }]} />
        </RibbonGroup>
        <RibbonGroup label="约束" menu>
          <Commands items={[{ icon: "vertical", text: "竖直" }, { icon: "horizontal", text: "水平" }, { icon: "perpendicular", text: "垂直" }]} />
          <Commands items={[{ icon: "tangent", text: "相切" }, { icon: "midpoint", text: "中点" }, { icon: "coincident", text: "重合" }]} />
          <Commands items={[{ icon: "symmetric", text: "对称" }, { icon: "equal", text: "相等" }, { icon: "parallel", text: "平行" }]} />
        </RibbonGroup>
        <RibbonGroup label="尺寸" menu>
          <Big icon="dimension" text="尺寸" />
          <Commands items={[{ icon: "perimeter", text: "周长" }, { icon: "baseline", text: "基线" }, { icon: "refDim", text: "参考" }]} />
        </RibbonGroup>
        <RibbonGroup label="检查" menu>
          <Big icon="feature" text="特征要求" />
        </RibbonGroup>
        <RibbonGroup label="关闭">
          <Big icon="ok" text="确定" />
          <Big icon="cancel" text="取消" />
        </RibbonGroup>
      </RibbonBar>

      <Workspace>
        <Side>
          <SideTabs>
            <SideTab $active aria-label="模型树"><Icon name="tree" /></SideTab>
            <SideTab aria-label="文件夹浏览器"><Icon name="folders" /></SideTab>
            <SideTab aria-label="收藏夹"><Icon name="favorites" /></SideTab>
          </SideTabs>
          <ToolRow>
            <ToolButton aria-label="模型"><Icon name="greenCube" /></ToolButton>
            <Grip />
            <ToolButton $space={29} aria-label="全部展开"><Icon name="expand" /></ToolButton>
            <ToolButton $space={10} aria-label="全部折叠"><Icon name="collapse" /></ToolButton>
            <ToolButton $on $space={7} aria-label="显示列"><Icon name="columns" /></ToolButton>
            <ToolRule $space={6} />
            <ToolButton $space={13} aria-label="树过滤器"><Icon name="treeFilter" /></ToolButton>
            <ToolButton $space={12} aria-label="树列"><Icon name="columnDoc" /></ToolButton>
            <ToolRule $space={11} />
            <ToolButton $space={12} aria-label="设计项"><Icon name="list" /></ToolButton>
            <ToolButton $space={13} aria-label="更多"><Icon name="more" /></ToolButton>
            <ToolWithFlyout $space={4} aria-label="设置"><Icon name="docList" /><MiniFlyout /></ToolWithFlyout>
          </ToolRow>
          <FilterRow>
            <Icon name="funnel" />
            <FilterBox>
              <FilterInput aria-label="过滤" />
              <IconButton aria-label="清除"><Icon name="clear" /></IconButton>
            </FilterBox>
            <IconButton aria-label="过滤选项"><Caret /></IconButton>
            <IconButton $space={14} aria-label="添加"><Icon name="plus" /></IconButton>
          </FilterRow>
          <Tree>
            <Node $level={0}><Icon name="part" />悬臂筒.PRT</Node>
            <Node $level={1}><Chevron /><Icon name="list" />设计项</Node>
            <Node $level={2} $latin><Icon name="plane" />RIGHT</Node>
            <Node $level={2} $latin><Icon name="plane" />TOP</Node>
            <Node $level={2} $latin><Icon name="plane" />FRONT</Node>
            <Node $level={2} $latin><Icon name="partCsys" />PRT_CSYS_DEF</Node>
            <InsertLine><InsertBar /></InsertLine>
            <Node $level={1}><Chevron open /><Icon name="extrude" /><NodeName><SparkMark />拉伸 1</NodeName></Node>
            <Node $level={2}><Twisty /><Icon name="section" /><NodeName><SparkMark />截面 1</NodeName></Node>
          </Tree>
        </Side>
        <Canvas>
          <Sketch />
          <ViewBar role="toolbar" aria-label="视图">
            <ViewButton aria-label="重新调整"><LargeIcon name="zoomFit" /></ViewButton>
            <ViewButton aria-label="显示样式"><LargeIcon name="shaded" /><Flyout /></ViewButton>
            <ViewButton aria-label="已保存方向"><LargeIcon name="views" /></ViewButton>
            <ViewButton aria-label="基准显示"><LargeIcon name="datums" /><Flyout /></ViewButton>
            <ViewButton aria-label="坐标系显示"><LargeIcon name="csysView" /></ViewButton>
            <ViewButton aria-label="草绘视图"><LargeIcon name="orient" /></ViewButton>
            <ViewButton $on aria-label="注释显示"><LargeIcon name="annotation" /></ViewButton>
            <ViewButton aria-label="旋转中心"><LargeIcon name="spin" /></ViewButton>
          </ViewBar>
        </Canvas>
      </Workspace>
    </Page>
  );
}
